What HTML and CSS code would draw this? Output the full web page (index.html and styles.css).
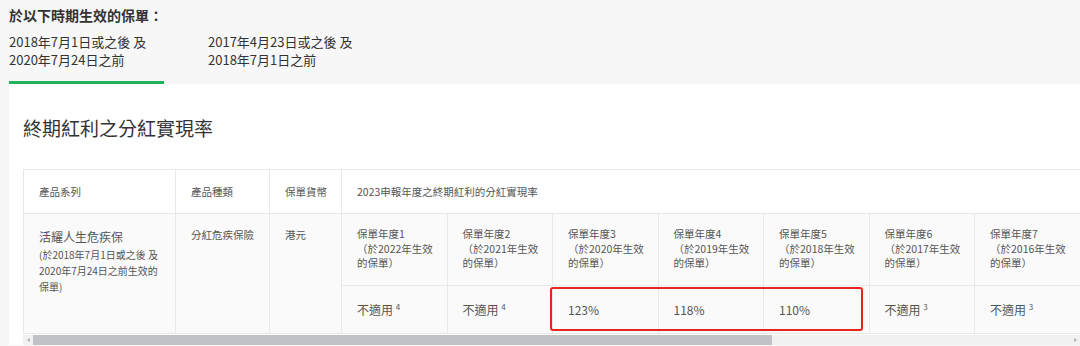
FILE: index.html
```html
<!DOCTYPE html>
<html lang="zh-Hant">
<head>
<meta charset="utf-8">
<title>終期紅利之分紅實現率</title>
<link rel="stylesheet" href="styles.css">
</head>
<body>
<div class="page">
  <div class="period">
    <h3 class="period-title">於以下時期生效的保單：</h3>
    <div class="tabs">
      <div class="tab active">2018年7月1日或之後 及<br>2020年7月24日之前</div>
      <div class="tab">2017年4月23日或之後 及<br>2018年7月1日之前</div>
    </div>
  </div>
  <section class="panel">
    <h2 class="panel-title">終期紅利之分紅實現率</h2>
    <div class="table-wrap">
      <div class="table-scroll">
        <table class="rates">
          <colgroup>
            <col class="c-series"><col class="c-type"><col class="c-cur">
            <col class="c-year"><col class="c-year"><col class="c-year"><col class="c-year">
            <col class="c-year"><col class="c-year"><col class="c-year"><col class="c-year">
            <col class="c-year"><col class="c-year"><col class="c-year">
          </colgroup>
          <thead>
            <tr class="row-head">
              <th>產品系列</th>
              <th>產品種類</th>
              <th>保單貨幣</th>
              <th colspan="11">2023申報年度之終期紅利的分紅實現率</th>
            </tr>
          </thead>
          <tbody>
            <tr class="row-sub">
              <td rowspan="2" class="cell-series">
                <div class="series-name">活耀人生危疾保</div>
                <div class="series-note">(於2018年7月1日或之後 及<br>2020年7月24日之前生效的<br>保單)</div>
              </td>
              <td rowspan="2" class="cell-plain">分紅危疾保險</td>
              <td rowspan="2" class="cell-plain">港元</td>
              <td class="cell-year">保單年度1<br>（於2022年生效<br>的保單）</td>
              <td class="cell-year">保單年度2<br>（於2021年生效<br>的保單）</td>
              <td class="cell-year">保單年度3<br>（於2020年生效<br>的保單）</td>
              <td class="cell-year">保單年度4<br>（於2019年生效<br>的保單）</td>
              <td class="cell-year">保單年度5<br>（於2018年生效<br>的保單）</td>
              <td class="cell-year">保單年度6<br>（於2017年生效<br>的保單）</td>
              <td class="cell-year">保單年度7<br>（於2016年生效<br>的保單）</td>
              <td class="cell-year">保單年度8<br>（於2015年生效<br>的保單）</td>
              <td class="cell-year">保單年度9<br>（於2014年生效<br>的保單）</td>
              <td class="cell-year">保單年度10<br>（於2013年生效<br>的保單）</td>
              <td class="cell-year">保單年度11<br>（於2012年生效<br>的保單）</td>
            </tr>
            <tr class="row-data">
              <td>不適用 <sup>4</sup></td>
              <td>不適用 <sup>4</sup></td>
              <td>123%</td>
              <td>118%</td>
              <td>110%</td>
              <td>不適用 <sup>3</sup></td>
              <td>不適用 <sup>3</sup></td>
              <td>不適用 <sup>3</sup></td>
              <td>不適用 <sup>3</sup></td>
              <td>不適用 <sup>3</sup></td>
              <td>不適用 <sup>3</sup></td>
            </tr>
          </tbody>
        </table>
        <div class="highlight"></div>
      </div>
      <div class="scrollbar">
        <span class="sb-arrow sb-left"></span>
        <div class="sb-track"><div class="sb-thumb"></div></div>
        <span class="sb-arrow sb-right"></span>
      </div>
    </div>
  </section>
</div>
</body>
</html>
```

FILE: styles.css
```css
html, body {
  margin: 0;
  padding: 0;
  overflow: hidden;
  background: #f7f7f7;
}

body {
  font-family: "Noto Sans CJK TC", "Noto Sans", sans-serif;
  color: #333;
}

.page {
  width: 1080px;
  height: 346px;
}

.period {
  padding: 5px 0 0 9px;
}

.period-title {
  margin: 0;
  font-size: 14px;
  line-height: 20px;
  font-weight: 700;
  color: #333;
}

.tabs {
  display: flex;
  gap: 44px;
  margin-top: 8px;
}

.tab {
  font-size: 13px;
  line-height: 18px;
  color: #333;
  padding-bottom: 12px;
  border-bottom: 3px solid transparent;
}

.tab.active {
  width: 155px;
  border-bottom-color: #1fb25a;
}

.panel {
  margin-left: 9px;
  background: #fff;
  padding: 30px 0 0 14px;
}

.panel-title {
  margin: 0;
  font-size: 19px;
  line-height: 28px;
  font-weight: 400;
  color: #333;
}

.table-wrap {
  margin-top: 27px;
}

.table-scroll {
  position: relative;
  overflow: hidden;
}

.rates {
  border-collapse: collapse;
  table-layout: fixed;
  width: 1479px;
  color: #555;
}

.c-series { width: 152px; }
.c-type { width: 94px; }
.c-cur { width: 72px; }
.c-year { width: 105.5px; }

.rates th,
.rates td {
  border: 1px solid #e8e8e8;
  padding: 0 12px 0 15px;
  text-align: left;
  font-weight: 400;
  white-space: nowrap;
  overflow: hidden;
}

.row-head {
  height: 44px;
  background: #fff;
}

.row-head th {
  font-size: 10.5px;
  line-height: 16px;
  vertical-align: middle;
}

.rates tbody td {
  background: #fafafa;
}

.row-sub {
  height: 72px;
}

.cell-series {
  vertical-align: top;
  padding-top: 13px !important;
}

.series-name {
  font-size: 12px;
  line-height: 20px;
}

.series-note {
  font-size: 10px;
  line-height: 16px;
}

.cell-plain {
  vertical-align: top;
  padding-top: 13px !important;
  font-size: 10.5px;
  line-height: 16px;
}

.cell-year {
  vertical-align: top;
  padding-top: 13px !important;
  font-size: 10.5px;
  line-height: 14.5px;
}

.row-data {
  height: 48px;
}

.row-data td {
  font-size: 12px;
  line-height: 18px;
  vertical-align: middle;
}

.row-data sup {
  font-size: 8px;
  line-height: 0;
  vertical-align: 5px;
}

.highlight {
  position: absolute;
  left: 527px;
  top: 118px;
  width: 309px;
  height: 40px;
  border: 2.5px solid #e9241c;
  border-radius: 3px;
}

.scrollbar {
  display: flex;
  align-items: center;
  height: 10px;
  margin-top: 1px;
  background: #f1f1f1;
}

.sb-arrow {
  width: 10px;
  height: 10px;
  display: flex;
  align-items: center;
  justify-content: center;
  flex: none;
}

.sb-left::before,
.sb-right::before {
  content: "";
  width: 0;
  height: 0;
  border-top: 2.5px solid transparent;
  border-bottom: 2.5px solid transparent;
}

.sb-left::before {
  border-right: 3px solid #b0b0b0;
}

.sb-right::before {
  border-left: 3px solid #b0b0b0;
}

.sb-track {
  flex: 1;
  height: 100%;
}

.sb-thumb {
  width: 739px;
  height: 100%;
  background: #c1c1c8;
}
```
